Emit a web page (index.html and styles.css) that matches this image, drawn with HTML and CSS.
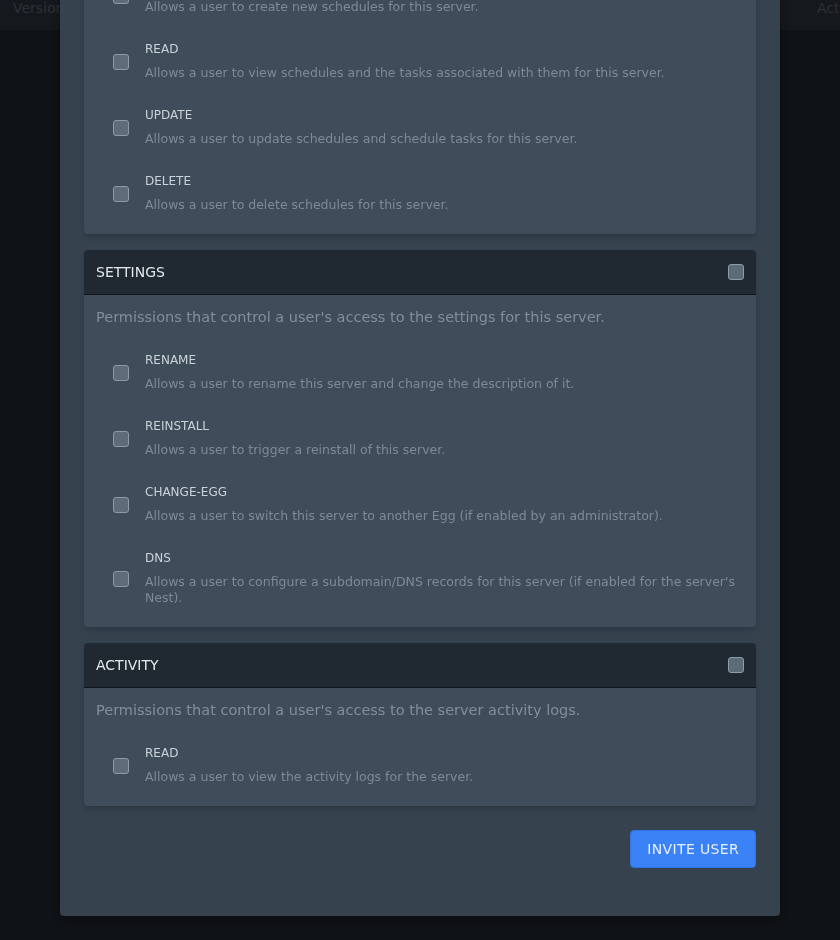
FILE: index.html
```
<!DOCTYPE html>
<html lang="en">
<head>
<meta charset="utf-8">
<title>Invite user</title>
<link rel="stylesheet" href="styles.css">
</head>
<body>
<div class="topbar">
  <span class="tb-left">Version</span>
  <span class="tb-right">Activity</span>
</div>
<div class="overlay">
  <div class="modal">
    <div class="perms">
      <section class="box">
        <div class="box-head"><p class="box-title">Schedules</p><input type="checkbox" class="cb"></div>
        <div class="box-body">
          <p class="box-desc">Permissions that control a user's access to the schedules for this server.</p>
          <label class="perm"><span class="cb-wrap"><input type="checkbox" class="cb"></span><span class="perm-text"><span class="perm-name">create</span><span class="perm-desc">Allows a user to create new schedules for this server.</span></span></label>
          <label class="perm"><span class="cb-wrap"><input type="checkbox" class="cb"></span><span class="perm-text"><span class="perm-name">read</span><span class="perm-desc">Allows a user to view schedules and the tasks associated with them for this server.</span></span></label>
          <label class="perm"><span class="cb-wrap"><input type="checkbox" class="cb"></span><span class="perm-text"><span class="perm-name">update</span><span class="perm-desc">Allows a user to update schedules and schedule tasks for this server.</span></span></label>
          <label class="perm"><span class="cb-wrap"><input type="checkbox" class="cb"></span><span class="perm-text"><span class="perm-name">delete</span><span class="perm-desc">Allows a user to delete schedules for this server.</span></span></label>
        </div>
      </section>
      <section class="box">
        <div class="box-head"><p class="box-title">Settings</p><input type="checkbox" class="cb"></div>
        <div class="box-body">
          <p class="box-desc">Permissions that control a user's access to the settings for this server.</p>
          <label class="perm"><span class="cb-wrap"><input type="checkbox" class="cb"></span><span class="perm-text"><span class="perm-name">rename</span><span class="perm-desc">Allows a user to rename this server and change the description of it.</span></span></label>
          <label class="perm"><span class="cb-wrap"><input type="checkbox" class="cb"></span><span class="perm-text"><span class="perm-name">reinstall</span><span class="perm-desc">Allows a user to trigger a reinstall of this server.</span></span></label>
          <label class="perm"><span class="cb-wrap"><input type="checkbox" class="cb"></span><span class="perm-text"><span class="perm-name">change-egg</span><span class="perm-desc">Allows a user to switch this server to another Egg (if enabled by an administrator).</span></span></label>
          <label class="perm"><span class="cb-wrap"><input type="checkbox" class="cb"></span><span class="perm-text"><span class="perm-name">dns</span><span class="perm-desc">Allows a user to configure a subdomain/DNS records for this server (if enabled for the server's Nest).</span></span></label>
        </div>
      </section>
      <section class="box">
        <div class="box-head"><p class="box-title">Activity</p><input type="checkbox" class="cb"></div>
        <div class="box-body">
          <p class="box-desc">Permissions that control a user's access to the server activity logs.</p>
          <label class="perm"><span class="cb-wrap"><input type="checkbox" class="cb"></span><span class="perm-text"><span class="perm-name">read</span><span class="perm-desc">Allows a user to view the activity logs for the server.</span></span></label>
        </div>
      </section>
    </div>
    <div class="actions">
      <button type="button" class="btn">Invite User</button>
    </div>
  </div>
</div>
</body>
</html>
```

FILE: styles.css
```
* { box-sizing: border-box; }
html, body { margin: 0; padding: 0; }
body {
  background: #0f1216;
  font-family: "DejaVu Sans", sans-serif;
  overflow: hidden;
  height: 940px;
}
p { margin: 0; }

.topbar {
  height: 30px;
  background: #15181c;
  display: grid;
  grid-template-columns: 1fr 23px;
  color: #2b3137;
  font-size: 14px;
  line-height: 17px;
}
.tb-left { padding-left: 13px; }
.tb-right { overflow: hidden; white-space: nowrap; }

.overlay {
  position: fixed;
  inset: 0;
  display: flex;
  justify-content: center;
  align-items: flex-start;
  overflow: hidden;
}
.modal {
  width: 720px;
  margin-top: -151px;
  padding: 24px 24px 24px;
  background: #36434f;
  border-radius: 4px;
  box-shadow: 0 4px 10px rgba(0,0,0,0.3);
}
.perms { display: grid; gap: 16px; }

.box {
  background: #3f4c59;
  border-radius: 4px;
  box-shadow: 0 4px 6px -1px rgba(0,0,0,0.15), 0 2px 4px -1px rgba(0,0,0,0.1);
}
.box-head {
  display: flex;
  align-items: center;
  padding: 12px;
  background: #202932;
  border-bottom: 1px solid #111519;
  border-radius: 4px 4px 0 0;
}
.box-title {
  flex: 1;
  font-size: 14px;
  line-height: 20px;
  text-transform: uppercase;
  color: #e4e7eb;
}
.box-body { padding: 12px; }
.box-desc {
  font-size: 14.5px;
  line-height: 20px;
  color: #838e99;
  margin-bottom: 16px;
}

.cb {
  appearance: none;
  -webkit-appearance: none;
  margin: 0;
  width: 16px;
  height: 16px;
  flex-shrink: 0;
  background: #5f6b78;
  border: 1px solid #8f9aa5;
  border-radius: 3px;
  display: block;
}

.perm {
  display: flex;
  align-items: center;
  border: 1px solid transparent;
  border-radius: 4px;
  padding: 8px;
}
.perm + .perm { margin-top: 8px; }
.cb-wrap { padding: 8px; }
.cb-wrap .cb { margin: 2px 8px 0 0; }
.perm-text { flex: 1; display: block; }
.perm-name {
  display: block;
  font-size: 12px;
  line-height: 16px;
  text-transform: uppercase;
  color: #cbd2d9;
  margin-bottom: 8px;
}
.perm-desc {
  display: block;
  font-size: 12.5px;
  line-height: 16px;
  color: #7f8a96;
}

.actions {
  display: flex;
  justify-content: flex-end;
  margin: 24px 0;
}
.btn {
  font-family: "DejaVu Sans", sans-serif;
  font-size: 14px;
  line-height: 20px;
  letter-spacing: 0.025em;
  text-transform: uppercase;
  color: #e6efff;
  background: #3b82f6;
  border: 1px solid #2f72e4;
  border-radius: 4px;
  padding: 8px 16px;
  cursor: pointer;
}
```
